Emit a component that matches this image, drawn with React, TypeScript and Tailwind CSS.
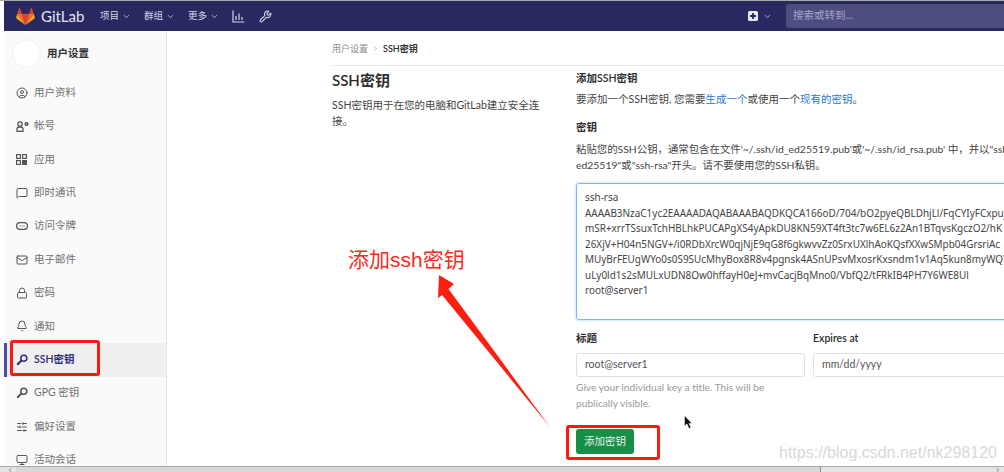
import {
  Bell,
  ChevronDown,
  ChevronLeft,
  ChevronRight,
  CircleUser,
  Lock,
  Mail,
  MessageSquare,
  Monitor,
  SlidersHorizontal,
  Wrench,
} from "lucide-react";
import type { ReactNode } from "react";

const Tanuki = () => (
  <svg width="19" height="17" viewBox="0 0 36 33">
    <path d="M18 33 L25 11 H11 Z" fill="#e24329" />
    <path d="M18 33 L11 11 H2 Z" fill="#fc6d26" />
    <path d="M2 11 L0 18 Q0 20 1 21 L18 33 Z" fill="#fca326" />
    <path d="M2 11 H11 L7 0 Q6.500 -0.500 6 0 Z" fill="#e24329" />
    <path d="M18 33 L25 11 H34 Z" fill="#fc6d26" />
    <path d="M34 11 L36 18 Q36 20 35 21 L18 33 Z" fill="#fca326" />
    <path d="M34 11 H25 L29 0 Q29.500 -0.500 30 0 Z" fill="#e24329" />
  </svg>
);

const AccountIcon = () => (
  <svg width="13" height="11" viewBox="0 0 13 11" fill="none" stroke="#555" strokeWidth="1.300">
    <circle cx="4" cy="3" r="2.200" />
    <path d="M1 10.300 V8 Q1 6 4 6 Q7 6 7 8 V10.300 Z" />
    <circle cx="10.500" cy="3" r="1.300" strokeWidth="1.600" />
  </svg>
);

const AppsIcon = () => (
  <svg width="11" height="11" viewBox="0 0 11 11" fill="none" stroke="#555" strokeWidth="1.200">
    <rect x="0.600" y="0.600" width="3.800" height="3.800" />
    <rect x="6.600" y="0.600" width="3.800" height="3.800" />
    <rect x="0.600" y="6.600" width="3.800" height="3.800" />
    <rect x="6.600" y="6.600" width="3.800" height="3.800" fill="#555" />
  </svg>
);

const TokenIcon = () => (
  <svg width="12" height="8" viewBox="0 0 12 8" fill="none" stroke="#555" strokeWidth="1.200">
    <rect x="0.600" y="0.600" width="10.800" height="6.800" rx="3.400" />
    <path d="M3.500 4 H8.500" strokeDasharray="1 1" />
  </svg>
);

const StatsIcon = () => (
  <svg width="13" height="13" viewBox="0 0 13 13" fill="none" stroke="#d5d5e8" strokeWidth="1.200">
    <path d="M1 0.500 V12 H12.500" />
    <path d="M4 6 V10 M7 3.500 V10 M10 7 V10" />
  </svg>
);

const PlusBox = () => (
  <svg width="10" height="10" viewBox="0 0 10 10">
    <rect width="10" height="10" rx="1.500" fill="#e8e8f2" />
    <path d="M5 2 V8 M2 5 H8" stroke="#292961" strokeWidth="1.800" />
  </svg>
);

const SideKey = ({ color }: { color: string }) => (
  <svg width="12" height="12" viewBox="0 0 12 12" fill="none" stroke={color} strokeWidth="1.500">
    <circle cx="7.800" cy="4.200" r="3" />
    <path d="M5.500 6.500 L1.200 10.800" strokeWidth="2" />
  </svg>
);

const ico = { size: 12, strokeWidth: 2, color: "#555" };

const items: { label: string; icon: ReactNode; active?: boolean }[] = [
  { label: "用户资料", icon: <CircleUser {...ico} /> },
  { label: "帐号", icon: <AccountIcon /> },
  { label: "应用", icon: <AppsIcon /> },
  { label: "即时通讯", icon: <MessageSquare {...ico} /> },
  { label: "访问令牌", icon: <TokenIcon /> },
  { label: "电子邮件", icon: <Mail {...ico} /> },
  { label: "密码", icon: <Lock {...ico} /> },
  { label: "通知", icon: <Bell {...ico} /> },
  { label: "SSH密钥", icon: <SideKey color="#2e2e7a" />, active: true },
  { label: "GPG 密钥", icon: <SideKey color="#555" /> },
  { label: "偏好设置", icon: <SlidersHorizontal {...ico} /> },
  { label: "活动会话", icon: <Monitor {...ico} /> },
];

const navMenus = ["项目", "群组", "更多"];

const keyLines = [
  "ssh-rsa",
  "AAAAB3NzaC1yc2EAAAADAQABAAABAQDKQCA166oD/704/bO2pyeQBLDhjLl/FqCYIyFCxpuj",
  "mSR+xrrTSsuxTchHBLhkPUCAPgXS4yApkDU8KN59XT4ft3tc7w6EL6z2An1BTqvsKgczO2/hK",
  "26XjV+H04n5NGV+/i0RDbXrcW0qjNjE9qG8f6gkwvvZz0SrxUXlhAoKQsfXXwSMpb04GrsriAc",
  "MUyBrFEUgWYo0s0S9SUcMhyBox8R8v4pgnsk4ASnUPsvMxosrKxsndm1v1Aq5kun8myWQY",
  "uLy0ld1s2sMULxUDN8Ow0hffayH0eJ+mvCacjBqMno0/VbfQ2/tFRkIB4PH7Y6WE8Ul",
  "root@server1",
];

export default function App() {
  return (
    <div className="relative flex h-[472px] w-[1004px] flex-col overflow-hidden bg-white font-['Lato','Noto_Sans_CJK_SC',sans-serif] text-[10.5px] text-[#444]">
      <div className="h-[1px] shrink-0 bg-[#a8a8a8]" />

      <div className="flex min-h-0 flex-1 pl-1">
        <div className="flex min-w-0 flex-1 flex-col">
          {/* top nav */}
          <header className="flex h-[30px] shrink-0 items-center bg-[#292961] pl-3 text-[#d5d5e8]">
            <Tanuki />
            <span className="ml-[6px] w-[59px] text-[15px] text-[#e4e4ef]">GitLab</span>
            <div className="flex items-center gap-[14px] text-[9.5px]">
              {navMenus.map((menu) => (
                <span key={menu} className="flex w-[30px] items-center gap-[3px] whitespace-nowrap">
                  {menu}
                  <ChevronDown size={9} className="shrink-0" />
                </span>
              ))}
              <StatsIcon />
              <Wrench size={13} strokeWidth={2} />
            </div>
            <div className="ml-auto flex items-center gap-[5px]">
              <PlusBox />
              <ChevronDown size={9} />
              <div className="ml-[9px] flex h-6 w-[218px] items-center rounded-l-[3px] bg-[#4d4d80] pl-[7px] text-[10.5px] text-[#a6a6c8]">
                搜索或转到...
              </div>
            </div>
          </header>

          <div className="flex min-h-0 flex-1">
            {/* sidebar */}
            <aside className="flex w-[163px] shrink-0 flex-col border-r border-[#e5e5e5] bg-[#fafafa]">
              <div className="flex h-[44px] shrink-0 items-center pl-2 pt-[1px]">
                <div className="h-[29px] w-[29px] rounded-full border border-[#f0f0f0] bg-white" />
                <span className="ml-[6px] text-[10.5px] font-semibold text-[#333]">用户设置</span>
              </div>
              <nav className="flex flex-col pt-[1px]">
                {items.map((item) => (
                  <div
                    key={item.label}
                    className={
                      item.active
                        ? "flex h-[33.4px] shrink-0 items-center border-l-[3px] border-[#4b4ba3] bg-[#efefef] pl-[9px] font-semibold text-[#2e2e7a]"
                        : "flex h-[33.4px] shrink-0 items-center pl-3 text-[#707070]"
                    }
                  >
                    <span className="flex w-[18px] shrink-0 items-center">{item.icon}</span>
                    <span>{item.label}</span>
                  </div>
                ))}
              </nav>
            </aside>

            {/* content */}
            <main className="min-w-0 flex-1 overflow-hidden pl-[165px]">
              <div className="flex h-[35px] items-center gap-[4px] border-b border-[#e5e5e5] pt-[1px] text-[9px] text-[#8c8c8c]">
                <span>用户设置</span>
                <ChevronRight size={7} />
                <span className="font-semibold text-[#333]">SSH密钥</span>
              </div>
              <div className="flex">
                <div className="w-[244px] shrink-0 pt-[3px]">
                  <h1 className="text-[15px] leading-[22px] font-semibold text-[#2e2e2e]">SSH密钥</h1>
                  <p className="mt-[6px] w-[216px] leading-4">SSH密钥用于在您的电脑和GitLab建立安全连接。</p>
                </div>
                <div className="w-[500px] shrink-0 pt-[4px]">
                  <h4 className="leading-[17px] font-semibold text-[#2e2e2e]">添加SSH密钥</h4>
                  <p className="mt-1 leading-[17px]">
                    要添加一个SSH密钥, 您需要<span className="text-[#1f78d1]">生成一个</span>或使用一个<span className="text-[#1f78d1]">现有的密钥</span>。
                  </p>
                  <h4 className="mt-[11px] leading-[17px] font-semibold text-[#2e2e2e]">密钥</h4>
                  <p className="mt-[5px] text-[10.4px] leading-4 whitespace-nowrap">
                    粘贴您的SSH公钥，通常包含在文件'~/.ssh/id_ed25519.pub'或'~/.ssh/id_rsa.pub' 中，并以"ssh-
                    <br />
                    ed25519"或"ssh-rsa"开头。请不要使用您的SSH私钥。
                  </p>
                  <div className="mt-[10px] h-[137px] overflow-hidden rounded-[3px] border border-[#73b9ff] px-2 pt-[6px] font-['Noto_Sans',sans-serif] text-[9.95px] leading-[15.5px] shadow-[0_0_3px_#9ccbff]">
                    {keyLines.map((line) => (
                      <div key={line} className="whitespace-nowrap">{line}</div>
                    ))}
                  </div>
                  <div className="mt-[10px] flex gap-2">
                    <div className="w-[229px] shrink-0">
                      <label className="block leading-[17px] font-semibold text-[#2e2e2e]">标题</label>
                      <div className="mt-[6px] flex h-6 items-center rounded-[3px] border border-[#dfdfdf] pl-2 text-[#555]">root@server1</div>
                      <p className="mt-[2px] w-[210px] text-[10.2px] leading-4 text-[#999]">Give your individual key a title. This will be publically visible.</p>
                    </div>
                    <div className="flex-1">
                      <label className="block leading-[17px] font-semibold text-[#2e2e2e]">Expires at</label>
                      <div className="mt-[6px] flex h-6 items-center rounded-[3px] border border-[#dfdfdf] pl-2 text-[#555]">mm/dd/yyyy</div>
                    </div>
                  </div>
                  <button className="mt-[18px] h-[25px] w-[58px] rounded-[3px] bg-[#168f48] text-[10.5px] text-[#e8f5ec]">添加密钥</button>
                </div>
              </div>
            </main>
          </div>
        </div>
      </div>

      {/* window scrollbar */}
      <div className="flex h-[6px] shrink-0 items-center border-t border-[#a8a8a8] bg-[#e4e4e4] pl-1">
        <ChevronLeft size={6} className="w-3 text-[#222]" />
        <div className="h-full w-[805px] border-r border-[#888] bg-[#d8d8d8]" />
        <ChevronRight size={6} className="ml-auto w-3 text-[#222]" />
      </div>

      {/* screenshot annotations */}
      <div className="absolute top-[340px] left-[10px] h-[36px] w-[90px] rounded-[3px] border-[3px] border-[#fb1a10]" />
      <div className="absolute top-[425px] left-[566px] h-[35px] w-[94px] rounded-[3px] border-[3px] border-[#fb1a10]" />
      <span className="absolute top-[246px] left-[348px] font-['Liberation_Sans','Noto_Sans_CJK_SC',sans-serif] text-[21px] leading-[28px] text-[#fb2a20]">添加ssh密钥</span>
      <svg className="absolute top-[271px] left-[436px]" width="116" height="160" viewBox="0 0 116 160">
        <path d="M3 4 L18 13 L12.500 18 L114 156 L6 24 L2 27 Z" fill="#fb1f10" />
      </svg>
      <svg className="absolute top-[415px] left-[684px]" width="10" height="15" viewBox="0 0 10 15">
        <path d="M0.500 0.500 V11 L3 9 L5 13.500 L7 12.500 L5 8.500 H8 Z" fill="#111" stroke="#fff" strokeWidth="0.500" />
      </svg>
      <span className="absolute top-[439px] left-[779px] font-['Liberation_Sans',sans-serif] text-[16px] leading-[28px] text-[#d8d8d8]">https://blog.csdn.net/nk298120</span>
    </div>
  );
}
